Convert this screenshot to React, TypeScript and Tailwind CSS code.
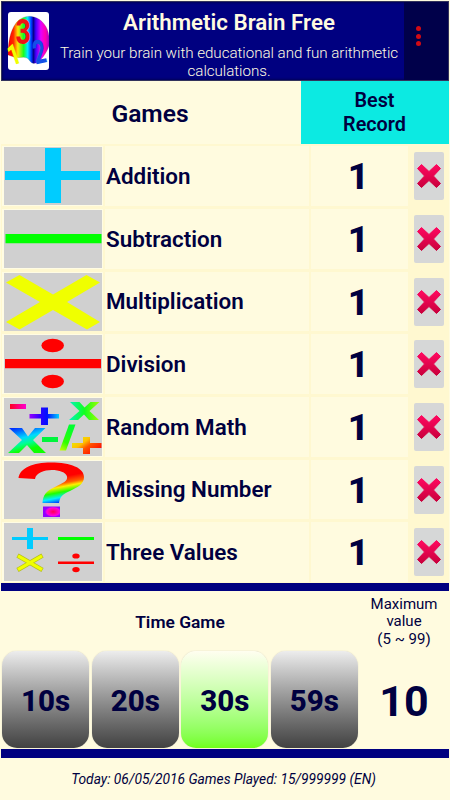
import React from 'react';
import clsx from 'clsx';

function Logo() {
  return (
    <svg viewBox="0 0 41 58" className="h-[58px] w-[41px] shrink-0 overflow-visible rounded-[3px] bg-white">
      <defs>
        <linearGradient id="brain" x1="0" x2="1" y1="0" y2="0">
          <stop offset="0" stopColor="#ff0000" />
          <stop offset="0.13" stopColor="#ff2500" />
          <stop offset="0.24" stopColor="#ffe600" />
          <stop offset="0.38" stopColor="#16ff20" />
          <stop offset="0.48" stopColor="#00eaff" />
          <stop offset="0.57" stopColor="#0038ff" />
          <stop offset="0.62" stopColor="#06008a" />
          <stop offset="0.68" stopColor="#4600ff" />
          <stop offset="0.8" stopColor="#e600ff" />
          <stop offset="0.91" stopColor="#ff00b0" />
          <stop offset="1" stopColor="#b000d0" />
        </linearGradient>
      </defs>
      <path
        d="M0 43C0 31 2 19 8 11C13 5 20 3 26 5C34 7 40 15 41 24L41 34C38 42 33 49 28 51C23 53 22 48 19 46C15 44 10 47 6 45L0 43Z"
        fill="url(#brain)"
        stroke="#30304055"
        strokeWidth="0.5"
      />
      <g fontFamily="Roboto" fontWeight="800">
        <text fontSize="36" fill="#f01414" transform="translate(7.5 32) scale(.74 1)">3</text>
        <text fontSize="29" fill="#f0ff00" transform="translate(3.5 54) rotate(-19) scale(.72 1)">1</text>
        <text fontSize="33" fill="#1450e6" transform="translate(27.5 52.5) rotate(-12) scale(.66 1)">2</text>
      </g>
    </svg>
  );
}

function AdditionIcon() {
  return <path d="M41 1H57V24H96V33H57V56H41V33H1V24H41Z" fill="#00ccff" />;
}

function SubtractionIcon() {
  return <path d="M1.5 24H97.5V33.3H1.5Z" fill="#00ff00" />;
}

function MultiplicationIcon() {
  return (
    <path
      d="M15.5 2L49 21.5L82.5 2L96 9.5L63 29L96 49L83 56.5L49 37L15.5 56.5L2 49L36 29L2 9.5Z"
      fill="#f0ff00"
    />
  );
}

function DivisionIcon() {
  return (
    <g fill="#ff0000">
      <path d="M1 24H97V33.3H1Z" />
      <ellipse cx="48.7" cy="10.5" rx="11.3" ry="6.7" />
      <ellipse cx="48.7" cy="46.5" rx="11.3" ry="6.7" />
    </g>
  );
}

function RandomIcon() {
  return (
    <g>
      <defs>
        <linearGradient id="rMinus">
          <stop offset="0" stopColor="#ff0020" />
          <stop offset="1" stopColor="#ff00d0" />
        </linearGradient>
        <linearGradient id="rPlus">
          <stop offset="0" stopColor="#9600ff" />
          <stop offset="0.35" stopColor="#3000ff" />
          <stop offset="0.6" stopColor="#0010ff" />
          <stop offset="1" stopColor="#00d0ff" />
        </linearGradient>
        <linearGradient id="rCross">
          <stop offset="0" stopColor="#00f5c0" />
          <stop offset="0.5" stopColor="#10ff20" />
          <stop offset="1" stopColor="#a0ff00" />
        </linearGradient>
        <linearGradient id="rBig" x1="0.2" y1="0" x2="0.6" y2="1">
          <stop offset="0" stopColor="#0030ff" />
          <stop offset="0.4" stopColor="#00d8ff" />
          <stop offset="0.62" stopColor="#00ff90" />
          <stop offset="0.85" stopColor="#10ff00" />
        </linearGradient>
        <linearGradient id="rSlash" x1="0" y1="1" x2="0.4" y2="0">
          <stop offset="0" stopColor="#d0ff00" />
          <stop offset="0.4" stopColor="#30ff00" />
          <stop offset="1" stopColor="#00ff30" />
        </linearGradient>
        <linearGradient id="rHot" x1="0" y1="0" x2="1" y2="0.8">
          <stop offset="0" stopColor="#e0ff00" />
          <stop offset="0.4" stopColor="#ffc000" />
          <stop offset="0.6" stopColor="#ff5000" />
          <stop offset="1" stopColor="#ff0000" />
        </linearGradient>
      </defs>
      <path d="M6 6H22V11H6Z" fill="url(#rMinus)" />
      <path d="M37 9.5H44V16H55V20.5H44V27H37V20.5H25.5V16H37Z" fill="url(#rPlus)" />
      <path d="M66 4H75.5L80.5 9.5L86.5 4H95.5L85.5 13L95 22H85L80 16.5L74 22H65L75.5 13Z" fill="url(#rCross)" />
      <path d="M5 30H18L24 38.5L31 30H41.5L29 42L42 55H30L23 47L15 55H4L18 42Z" fill="url(#rBig)" />
      <path d="M38 39H54V44H38Z" fill="#00f53c" />
      <path d="M65 26.5H71.5L62 52.5H55.5Z" fill="url(#rSlash)" />
      <path d="M79 39H86V45H97.5V50H86V56H79V50H68V45H79Z" fill="url(#rHot)" />
    </g>
  );
}

function QuestionIcon() {
  return (
    <g>
      <defs>
        <linearGradient id="hook" gradientUnits="userSpaceOnUse" x1="44" y1="1" x2="52" y2="43">
          <stop offset="0.4" stopColor="#ff0000" />
          <stop offset="0.55" stopColor="#ff6000" />
          <stop offset="0.63" stopColor="#fff000" />
          <stop offset="0.75" stopColor="#20ff00" />
          <stop offset="0.87" stopColor="#00f0ff" />
          <stop offset="1" stopColor="#0020ff" />
        </linearGradient>
        <radialGradient id="dot" cx="0.6">
          <stop offset="0" stopColor="#ff0050" />
          <stop offset="0.75" stopColor="#ff00e0" />
          <stop offset="1" stopColor="#9000ff" />
        </radialGradient>
      </defs>
      <path
        d="M14.5 17C16 7 29 1.5 47 1.5C67 1.5 80 7 80 16C80 23 74 26 66 30C58 33.5 56 36 55 42H38.5C39 34 42 30 51 26C59 22 64 20 63 15.5C61 7 33 6 31 18Z"
        fill="url(#hook)"
      />
      <path d="M39 45.5H56V56H39Z" fill="url(#dot)" />
    </g>
  );
}

function ThreeValuesIcon() {
  return (
    <g>
      <path d="M23 5H29V14H44V17H29V26H23V17H8V14H23Z" fill="#00ccff" />
      <path d="M54 14H90V17H54Z" fill="#00ff00" />
      <path d="M13.5 32.5L38.5 47M38.5 32.5L13.5 47" stroke="#b4bd20" strokeWidth="4.4" />
      <path d="M14 32.8L38 46.7M38 32.8L14 46.7" stroke="#f0ff00" strokeWidth="3.2" />
      <g fill="#ff0000">
        <path d="M54 38.5H90V41H54Z" />
        <ellipse cx="72" cy="33" rx="3.7" ry="2.6" />
        <ellipse cx="72" cy="46.6" rx="3.7" ry="2.6" />
      </g>
    </g>
  );
}

const games = [
  { name: 'Addition', record: 1, icon: AdditionIcon },
  { name: 'Subtraction', record: 1, icon: SubtractionIcon },
  { name: 'Multiplication', record: 1, icon: MultiplicationIcon },
  { name: 'Division', record: 1, icon: DivisionIcon },
  { name: 'Random Math', record: 1, icon: RandomIcon },
  { name: 'Missing Number', record: 1, icon: QuestionIcon },
  { name: 'Three Values', record: 1, icon: ThreeValuesIcon },
];

const times = ['10s', '20s', '30s', '59s'];

function Header() {
  return (
    <header className="mx-px mt-px flex h-20 border border-[#33335c] bg-[#000080] shadow-[inset_0_0_3px_#000030]">
      <div className="flex items-start pl-[6px] pt-[10px]">
        <Logo />
      </div>
      <div className="flex-1 pl-[5px] pt-[7px] text-center text-[#fffbe0]">
        <h1 className="text-[22.3px] font-semibold leading-[26px]">Arithmetic Brain Free</h1>
        <p className="mt-[10px] whitespace-nowrap text-[15.2px] font-light leading-[17.5px] tracking-[-0.05px]">
          Train your brain with educational and fun arithmetic
          <br />
          calculations.
        </p>
      </div>
      <button className="flex w-[44px] flex-col items-center gap-[2.5px] bg-[#00004a] pr-[15px] pt-[24px]">
        <span className="size-[5px] rounded-full bg-[#d20a14]" />
        <span className="size-[5px] rounded-full bg-[#d20a14]" />
        <span className="size-[5px] rounded-full bg-[#d20a14]" />
      </button>
    </header>
  );
}

function DeleteButton() {
  return (
    <button className="flex h-[48px] w-[30px] items-center justify-center rounded-[2px] bg-[#d6d7d7]">
      <svg viewBox="0 0 24 24" className="size-[24px]">
        <defs>
          <linearGradient id="cross" x1="0" x2="0" y1="0" y2="1">
            <stop offset="0" stopColor="#ff0860" />
            <stop offset="1" stopColor="#c8003c" />
          </linearGradient>
        </defs>
        <path
          d="M4.5 0.5L12 7.5L19.5 0.5L23.5 4.5L16.5 12L23.5 19.5L19.5 23.5L12 16.5L4.5 23.5L0.5 19.5L7.5 12L0.5 4.5Z"
          fill="url(#cross)"
          stroke="url(#cross)"
          strokeLinejoin="round"
        />
      </svg>
    </button>
  );
}

function GameRow({ game }: { game: (typeof games)[number] }) {
  const Icon = game.icon;
  return (
    <div className="grid h-[62.66px] grid-cols-[101px_204px_97px_1fr] gap-x-[2px] pb-px pl-px pt-[2px]">
      <div className="flex items-center justify-center bg-[#fffce4]">
        <svg viewBox="0 0 98 58" preserveAspectRatio="none" className="h-[58px] w-[98px] bg-[#d0d0d0]">
          <Icon />
        </svg>
      </div>
      <div className="flex items-center bg-[#fffbdf] pl-px pt-px text-[22.4px] font-semibold">{game.name}</div>
      <div className="flex items-center justify-center bg-[#fffbdf] pr-[2px] pt-[2px] text-[37px] font-extrabold">
        {game.record}
      </div>
      <div className="flex items-center pl-[4px]">
        <DeleteButton />
      </div>
    </div>
  );
}

export default function App() {
  return (
    <div className="flex h-[800px] w-[450px] flex-col overflow-hidden bg-[#fffbdf] font-['Roboto',sans-serif] text-[#000040]">
      <Header />

      <div className="mr-px flex h-[63.4px]">
        <div className="flex flex-1 items-center justify-center pr-px pt-[3px] text-[24.6px] font-semibold">Games</div>
        <div className="flex w-[148px] items-center justify-center bg-[#0ceae2] pr-px pt-px text-center text-[19.8px] font-semibold leading-[24px]">
          Best
          <br />
          Record
        </div>
      </div>

      <div className="mx-px h-[439px] bg-[#fff8d0]">
        {games.map((game) => (
          <GameRow key={game.name} game={game} />
        ))}
      </div>

      <div className="mx-px h-[7.6px] shrink-0 bg-[#000080]" />

      <div className="flex h-[158px] shrink-0">
        <div className="w-[360px]">
          <div className="flex h-[60px] items-center justify-center pt-[2px] text-[17.4px] font-semibold">Time Game</div>
          <div className="flex gap-[2.3px] pl-[2px]">
            {times.map((time) => (
              <button
                key={time}
                className={clsx(
                  'h-[97px] w-[87.3px] rounded-[15px] bg-gradient-to-b pt-[3px] text-[29.5px] font-extrabold shadow-[0_0_1px_#80808080]',
                  time === '30s' ? 'from-[#fffef0] to-[#70ff14]' : 'from-[#ededed] to-[#424242]',
                )}
              >
                {time}
              </button>
            ))}
          </div>
        </div>
        <div className="w-[88px] text-center">
          <div className="pt-[5px] text-[15px] leading-[17.5px]">
            Maximum
            <br />
            value
            <br />
            (5 ~ 99)
          </div>
          <div className="mt-[28px] text-[43px] font-bold leading-[50px]">10</div>
        </div>
      </div>

      <div className="mx-px h-[9.5px] shrink-0 bg-[#000080]" />
      <footer className="pt-[11px] pr-[3px] text-center text-[13.8px] italic leading-[20px]">
        Today: 06/05/2016 Games Played: 15/999999 (EN)
      </footer>
    </div>
  );
}
